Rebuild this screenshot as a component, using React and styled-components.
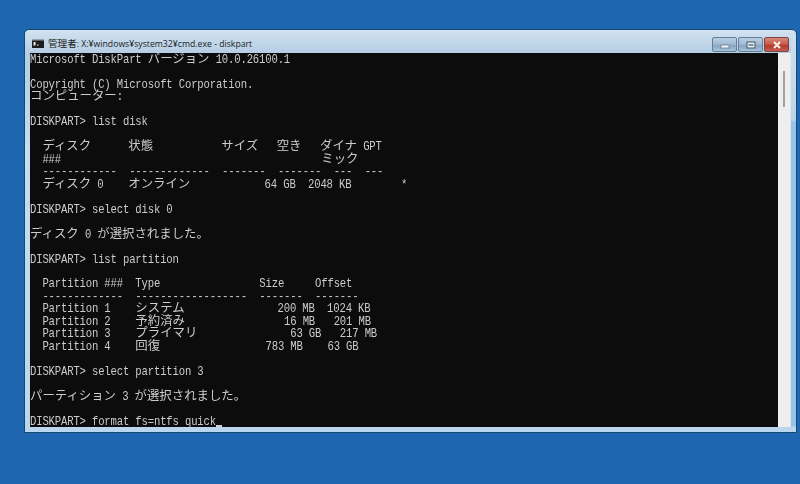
import React from 'react';
import styled, { createGlobalStyle } from 'styled-components';

const CELL = 6.2;

const lines = [
  'Microsoft DiskPart バージョン 10.0.26100.1',
  '',
  'Copyright (C) Microsoft Corporation.',
  'コンピューター:',
  '',
  'DISKPART> list disk',
  '',
  '  ディスク      状態           サイズ   空き   ダイナ GPT',
  '  ###                                          ミック',
  '  ------------  -------------  -------  -------  ---  ---',
  '  ディスク 0    オンライン            64 GB  2048 KB        *',
  '',
  'DISKPART> select disk 0',
  '',
  'ディスク 0 が選択されました。',
  '',
  'DISKPART> list partition',
  '',
  '  Partition ###  Type                Size     Offset',
  '  -------------  ------------------  -------  -------',
  '  Partition 1    システム               200 MB  1024 KB',
  '  Partition 2    予約済み                16 MB   201 MB',
  '  Partition 3    プライマリ               63 GB   217 MB',
  '  Partition 4    回復                 783 MB    63 GB',
  '',
  'DISKPART> select partition 3',
  '',
  'パーティション 3 が選択されました。',
  '',
];

// full-width runs fill two console cells, the rest is stretched to the tall console glyphs
const splitCells = (text) =>
  text.split(/([\u3000-\u30ff\u4e00-\u9fff]+)/).map((part, i) => {
    if (i % 2) return <Wide key={i}>{part}</Wide>;
    return part ? <Latin key={i}>{part}</Latin> : null;
  });

const GlobalStyle = createGlobalStyle`
  html, body {
    margin: 0;
    padding: 0;
    background: #1f66b1;
  }
`;

const Desktop = styled.div`
  width: 800px;
  height: 484px;
  box-sizing: border-box;
  padding: 29px 3px 0 24px;
  background: #1f66b1;
  overflow: hidden;
`;

const Window = styled.div`
  height: 404px;
  box-sizing: border-box;
  display: flex;
  flex-direction: column;
  border: 1px solid #16496f;
  border-radius: 5px 5px 0 0;
  background:
    linear-gradient(180deg, #cfe0ef 0, #bcd4e8 90px, #97c3e8 92px, #97c3e8 396px, #bad5ed 397px) right top / 5px 100% no-repeat,
    linear-gradient(180deg, #d2e2f0 0%, #b3cde4 24px, #c6dcef 120px, #bad6ee 100%);
  padding: 0 5px 5px 5px;
`;

const TitleBar = styled.div`
  height: 23px;
  flex: none;
  display: flex;
  align-items: center;
  gap: 4px;
  padding: 3px 0 0 2px;
  box-sizing: border-box;
`;

const TitleText = styled.span`
  flex: 1;
  font: 8.7px "Open Sans", "Noto Sans CJK JP", sans-serif;
  color: #1c1c1c;
  white-space: nowrap;
`;

const TitleKanji = styled.span`
  font-family: "Noto Sans CJK JP", sans-serif;
  font-size: 9.6px;
`;

const Controls = styled.div`
  display: flex;
  gap: 1px;
  margin: 3px 2px 0 0;
`;

const ControlButton = styled.div`
  width: 25px;
  height: 15px;
  box-sizing: border-box;
  display: flex;
  align-items: center;
  justify-content: center;
  border: 1px solid ${({ $close }) => ($close ? '#7b4048' : '#647d98')};
  border-radius: 2px;
  background: ${({ $close }) =>
    $close
      ? 'linear-gradient(180deg, #d48a7c 0%, #cc5d4c 45%, #b33a2c 60%, #c4604f 100%)'
      : 'linear-gradient(180deg, #b9cee1 0%, #a3bcd4 45%, #88a5c2 60%, #a9c3da 100%)'};
`;

const Client = styled.div`
  flex: 1;
  min-height: 0;
  display: flex;
`;

const Terminal = styled.pre`
  flex: 1;
  min-width: 0;
  margin: 0;
  padding: 0;
  overflow: hidden;
  background: #0c0c0c;
  color: #cccccc;
  font: 10.6px/12.47px "Liberation Mono", monospace;
  filter: blur(0.25px);
`;

const Line = styled.div`
  height: 12.47px;
  white-space: pre;
`;

const Latin = styled.span`
  display: inline-block;
  letter-spacing: ${CELL - 6.36}px;
  transform: scaleY(1.2);
  transform-origin: 50% 30%;
`;

const Wide = styled.span`
  font-family: "Noto Sans CJK JP", sans-serif;
  font-size: ${CELL * 2}px;
  line-height: 0;
  vertical-align: -0.7px;
`;

const Cursor = styled.span`
  display: inline-block;
  width: ${CELL}px;
  height: 2px;
  background: #d0d0d0;
  vertical-align: -3px;
`;

const Scrollbar = styled.div`
  width: 13px;
  flex: none;
  display: flex;
  justify-content: center;
  box-sizing: border-box;
  background: #eeeeee;
  border-right: 1px solid #dde5ee;
`;

const Thumb = styled.div`
  width: 2px;
  height: 36px;
  background: #a2a2a2;
  margin-top: 18px;
`;

const CmdIcon = () => (
  <svg width="12" height="9" viewBox="0 0 12 9" style={{ flex: 'none' }}>
    <rect width="12" height="9" fill="#1c1c1c" />
    <rect x="0" y="0" width="12" height="1.5" fill="#9aa4ad" />
    <path d="M1.5 3h2v3.5h-2zM5 5.5h1.5v1H5z" fill="#f0f0f0" />
  </svg>
);

const App = () => (
  <>
    <GlobalStyle />
    <Desktop>
      <Window>
        <TitleBar>
          <CmdIcon />
          <TitleText><TitleKanji>管理者</TitleKanji>: X:¥windows¥system32¥cmd.exe - diskpart</TitleText>
          <Controls>
            <ControlButton>
              <svg width="10" height="5" viewBox="0 0 10 5" style={{ marginTop: 4 }}>
                <rect x="1" y="1" width="8" height="3" fill="#f2f6fa" stroke="#5b6f83" strokeWidth="0.7" />
              </svg>
            </ControlButton>
            <ControlButton>
              <svg width="10" height="8" viewBox="0 0 10 8">
                <rect x="1" y="1" width="8" height="6" fill="#e6edf3" stroke="#46586a" strokeWidth="1" />
                <rect x="2.5" y="3" width="5" height="2" fill="#7f93a7" />
              </svg>
            </ControlButton>
            <ControlButton $close>
              <svg width="10" height="8" viewBox="0 0 10 8">
                <path d="M2 1l6 6M8 1L2 7" stroke="#f7efee" strokeWidth="2" />
              </svg>
            </ControlButton>
          </Controls>
        </TitleBar>
        <Client>
          <Terminal>
            {lines.map((text, i) => (
              <Line key={i}>{splitCells(text)}</Line>
            ))}
            <Line><Latin>DISKPART&gt; format fs=ntfs quick</Latin><Cursor /></Line>
          </Terminal>
          <Scrollbar>
            <Thumb />
          </Scrollbar>
        </Client>
      </Window>
    </Desktop>
  </>
);

export default App;
